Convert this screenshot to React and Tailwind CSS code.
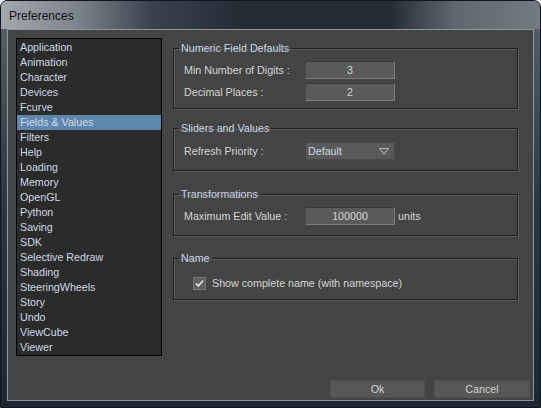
import React from "react";

const items = [
  "Application", "Animation", "Character", "Devices", "Fcurve", "Fields & Values",
  "Filters", "Help", "Loading", "Memory", "OpenGL", "Python", "Saving", "SDK",
  "Selective Redraw", "Shading", "SteeringWheels", "Story", "Undo", "ViewCube", "Viewer",
];

const inputCls =
  "w-[90px] h-[18px] bg-[#5a5a5a] border border-t-[#383838] border-l-[#454545] border-b-[#7c7c7c] border-r-[#7c7c7c] text-[#d4d4d4] flex items-center justify-center";

const Group = ({ title, className, children }) => (
  <fieldset
    className={`border border-[#1f1f1f] shadow-[1px_1px_0_#5c5c5c,inset_1px_1px_0_#5c5c5c] px-[5px] ${className}`}
  >
    <legend className="px-[2px] leading-[13px] text-[#c9d6e3]">{title}</legend>
    {children}
  </fieldset>
);

const App = () => {
  const selected = "Fields & Values";

  return (
    <div
      className="w-[541px] h-[408px] flex flex-col rounded-t-[7px] border border-[#10161c] bg-gradient-to-b from-[#5c636a] via-[#2c3642] to-[#1d2732] text-[10.7px]"
      style={{ fontFamily: '"Liberation Sans", Arial, sans-serif' }}
    >
      {/* Title bar */}
      <div className="h-[28px] flex items-center pl-[8px] rounded-t-[6px] bg-[linear-gradient(to_right,#a3a8ad_0%,#7d848b_14%,#39434f_28%,#232b35_45%,#232b35_72%,#5f666d_84%,#737a80_100%)]">
        <span className="text-[12px] text-[#111] pt-[2px]">Preferences</span>
      </div>

      {/* Client area */}
      <div className="flex-1 mx-[6px] mb-[6px] border border-[#8e98a3] bg-[#444444] flex flex-col">
        <div className="flex-1 flex">
          {/* List */}
          <div className="mt-[8px] ml-[8px] w-[146px] h-[318px] bg-[#2b2b2b] border border-black pt-[1px]">
            {items.map((it) => (
              <div
                key={it}
                className={`h-[15px] leading-[15px] pl-[3px] text-[#cfd9e4] ${
                  it === selected ? "bg-[#5e87b0]" : ""
                }`}
              >
                {it}
              </div>
            ))}
          </div>

          {/* Settings */}
          <div className="ml-[11px] w-[345px] pt-[12px] text-[#d6d6d6]">
            <Group title="Numeric Field Defaults" className="pb-[7px]">
              <div className="pl-[5px] pt-[6px] flex flex-col gap-[4px]">
                <div className="flex items-center">
                  <span className="w-[121px]">Min Number of Digits :</span>
                  <div className={inputCls}>3</div>
                </div>
                <div className="flex items-center">
                  <span className="w-[121px]">Decimal Places :</span>
                  <div className={inputCls}>2</div>
                </div>
              </div>
            </Group>

            <Group title="Sliders and Values" className="mt-[13px] pb-[10px]">
              <div className="pl-[5px] pt-[7px] flex items-center">
                <span className="w-[121px]">Refresh Priority :</span>
                <div className="w-[90px] h-[18px] bg-[#595959] border border-[#4a4a4a] flex items-center justify-between pl-[2px] pr-[5px] text-[#cfd9e4]">
                  <span>Default</span>
                  <svg width="10" height="7" viewBox="0 0 10 7">
                    <path d="M0.5 0.5 H9.5 L5 6.5 Z" fill="#5e5e5e" stroke="#b8b8b8" strokeWidth="1" />
                  </svg>
                </div>
              </div>
            </Group>

            <Group title="Transformations" className="mt-[17px] pb-[10px]">
              <div className="pl-[5px] pt-[6px] flex items-center">
                <span className="w-[121px]">Maximum Edit Value :</span>
                <div className={inputCls}>100000</div>
                <span className="ml-[3px]">units</span>
              </div>
            </Group>

            <Group title="Name" className="mt-[16px] pb-[8px]">
              <div className="pl-[14px] pt-[10px] flex items-center">
                <div className="w-[13px] h-[13px] bg-[#5e5e5e] border border-[#7a7a7a] flex items-center justify-center">
                  <svg width="11" height="11" viewBox="0 0 11 11">
                    <path d="M2 5.5 L4.5 8 L9 2.5" fill="none" stroke="#dcdcdc" strokeWidth="1.8" />
                  </svg>
                </div>
                <span className="ml-[6px]">Show complete name (with namespace)</span>
              </div>
            </Group>
          </div>
        </div>

        {/* Buttons */}
        <div className="flex justify-end gap-[9px] pr-[3px] pb-[2px]">
          <button className="w-[95px] h-[18px] bg-[#575757] border border-[#4e4e4e] text-[#d2d2d2]">Ok</button>
          <button className="w-[96px] h-[18px] bg-[#575757] border border-[#4e4e4e] text-[#d2d2d2]">Cancel</button>
        </div>
      </div>
    </div>
  );
};

export default App;
